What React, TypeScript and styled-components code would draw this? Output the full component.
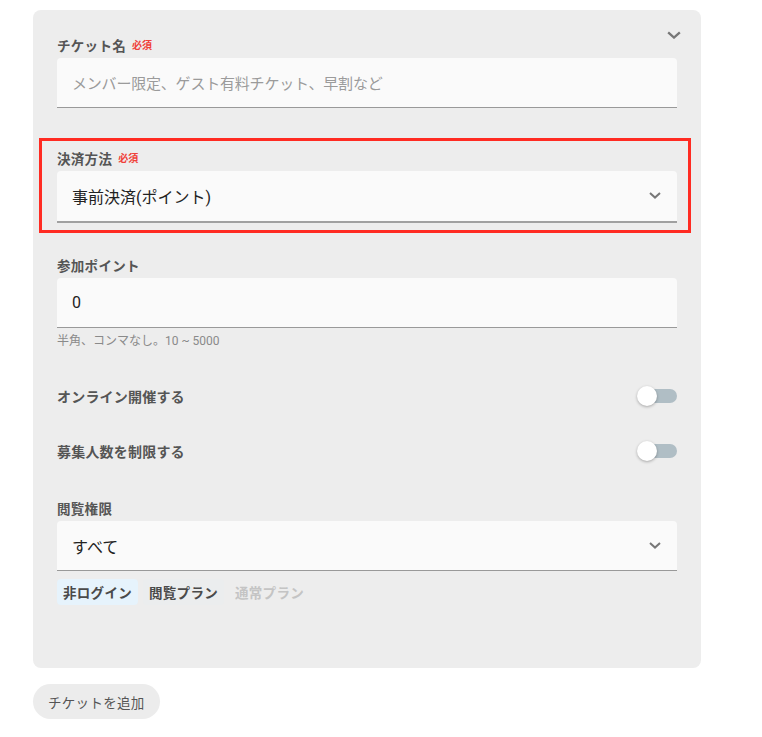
import React from "react";
import styled, { createGlobalStyle } from "styled-components";

const Global = createGlobalStyle`
  html, body { margin: 0; padding: 0; background: #fff; }
  body { font-family: Roboto, "Noto Sans CJK JP", sans-serif; color: #222; }
  * { box-sizing: border-box; }
`;

const Page = styled.div`
  padding: 10px 0 0 33px;
  width: 762px;
`;

const Card = styled.section`
  position: relative;
  width: 668px;
  background: #ededed;
  border-radius: 8px;
  padding: 27px 24px 63px;
  display: flex;
  flex-direction: column;
`;

const CollapseButton = styled.button`
  position: absolute;
  top: 14px;
  right: 16px;
  width: 22px;
  height: 22px;
  padding: 0;
  border: none;
  background: none;
  display: flex;
  align-items: center;
  justify-content: center;
  color: #7a7a7a;
`;

const Field = styled.div<{ $mt?: number }>`
  display: flex;
  flex-direction: column;
  margin-top: ${(p) => p.$mt ?? 0}px;
`;

const Highlight = styled.div`
  margin: 30px -14px 0 -18px;
  border: 3px solid #ff2b22;
  padding: 9px 11px 7px 15px;
  display: flex;
  flex-direction: column;
`;

const Label = styled.label`
  display: flex;
  align-items: center;
  gap: 6px;
  font-size: 13.5px;
  line-height: 18px;
  font-weight: 700;
  color: #555;
  letter-spacing: 0.3px;
  margin-bottom: 3px;
`;

const Required = styled.span`
  font-size: 10px;
  font-weight: 700;
  color: #f0413a;
  letter-spacing: 0;
`;

const InputBox = styled.div<{ $thick?: boolean }>`
  height: ${(p) => (p.$thick ? 52 : 50)}px;
  background: #fafafa;
  border-radius: 4px 4px 0 0;
  border-bottom: ${(p) => (p.$thick ? 2 : 1)}px solid ${(p) => (p.$thick ? "#a0a0a0" : "#999")};
  display: flex;
  align-items: center;
  padding: 0 16px 0 15px;
`;

const Placeholder = styled.span`
  font-size: 15px;
  color: #9b9b9b;
  letter-spacing: -0.2px;
`;

const Value = styled.span`
  flex: 1;
  font-size: 16px;
  color: #222;
`;

const Helper = styled.div`
  margin-top: 5px;
  font-size: 12px;
  line-height: 16px;
  color: #8a8a8a;
`;

const ToggleRow = styled.div<{ $mt: number }>`
  margin-top: ${(p) => p.$mt}px;
  height: 40px;
  display: flex;
  align-items: center;
  justify-content: space-between;
`;

const ToggleLabel = styled.span`
  font-size: 14px;
  font-weight: 700;
  color: #555;
  letter-spacing: 0.2px;
`;

const Switch = styled.span`
  position: relative;
  width: 40px;
  height: 20px;
  display: block;
`;

const Track = styled.span`
  position: absolute;
  left: 4px;
  right: 0;
  top: 3px;
  height: 14px;
  border-radius: 7px;
  background: #b0bec5;
`;

const Knob = styled.span`
  position: absolute;
  left: 0;
  top: 0;
  width: 20px;
  height: 20px;
  border-radius: 50%;
  background: #fff;
  box-shadow: 0 1px 3px rgba(0, 0, 0, 0.3);
`;

const Chips = styled.div`
  margin-top: 8px;
  display: flex;
  gap: 5px;
`;

const Chip = styled.span<{ $variant: "active" | "plain" | "disabled" }>`
  height: 26px;
  padding: 0 6px;
  border-radius: 4px;
  display: flex;
  align-items: center;
  font-size: 13.5px;
  font-weight: 700;
  letter-spacing: 0.3px;
  background: ${(p) =>
    p.$variant === "active" ? "#e6f3fc" : p.$variant === "plain" ? "#ebedee" : "transparent"};
  color: ${(p) => (p.$variant === "disabled" ? "#c4c4c4" : "#4a4a4a")};
`;

const AddButton = styled.button`
  margin-top: 16px;
  height: 35px;
  padding: 0 15px;
  border: none;
  border-radius: 18px;
  background: #ececec;
  font-family: Roboto, "Noto Sans CJK JP", sans-serif;
  font-size: 13.5px;
  color: #555;
  letter-spacing: 0.3px;
`;

const Chevron = ({ size = 12 }: { size?: number }) => (
  <svg width={size} height={size * 0.6} viewBox="0 0 12 7" fill="none">
    <path d="M1 1l5 4.5L11 1" stroke="#777" strokeWidth="2" />
  </svg>
);

export default function App() {
  return (
    <>
      <Global />
      <Page>
        <Card>
          <CollapseButton aria-label="collapse">
            <Chevron size={14} />
          </CollapseButton>

          <Field>
            <Label>
              チケット名<Required>必須</Required>
            </Label>
            <InputBox>
              <Placeholder>メンバー限定、ゲスト有料チケット、早割など</Placeholder>
            </InputBox>
          </Field>

          <Highlight>
            <Label>
              決済方法<Required>必須</Required>
            </Label>
            <InputBox $thick>
              <Value>事前決済(ポイント)</Value>
              <Chevron />
            </InputBox>
          </Highlight>

          <Field $mt={24}>
            <Label>参加ポイント</Label>
            <InputBox>
              <Value>0</Value>
            </InputBox>
            <Helper>半角、コンマなし。10 ~ 5000</Helper>
          </Field>

          <ToggleRow $mt={27}>
            <ToggleLabel>オンライン開催する</ToggleLabel>
            <Switch>
              <Track />
              <Knob />
            </Switch>
          </ToggleRow>
          <ToggleRow $mt={15}>
            <ToggleLabel>募集人数を制限する</ToggleLabel>
            <Switch>
              <Track />
              <Knob />
            </Switch>
          </ToggleRow>

          <Field $mt={29}>
            <Label>閲覧権限</Label>
            <InputBox>
              <Value>すべて</Value>
              <Chevron />
            </InputBox>
            <Chips>
              <Chip $variant="active">非ログイン</Chip>
              <Chip $variant="plain">閲覧プラン</Chip>
              <Chip $variant="disabled">通常プラン</Chip>
            </Chips>
          </Field>
        </Card>
        <AddButton>チケットを追加</AddButton>
      </Page>
    </>
  );
}
